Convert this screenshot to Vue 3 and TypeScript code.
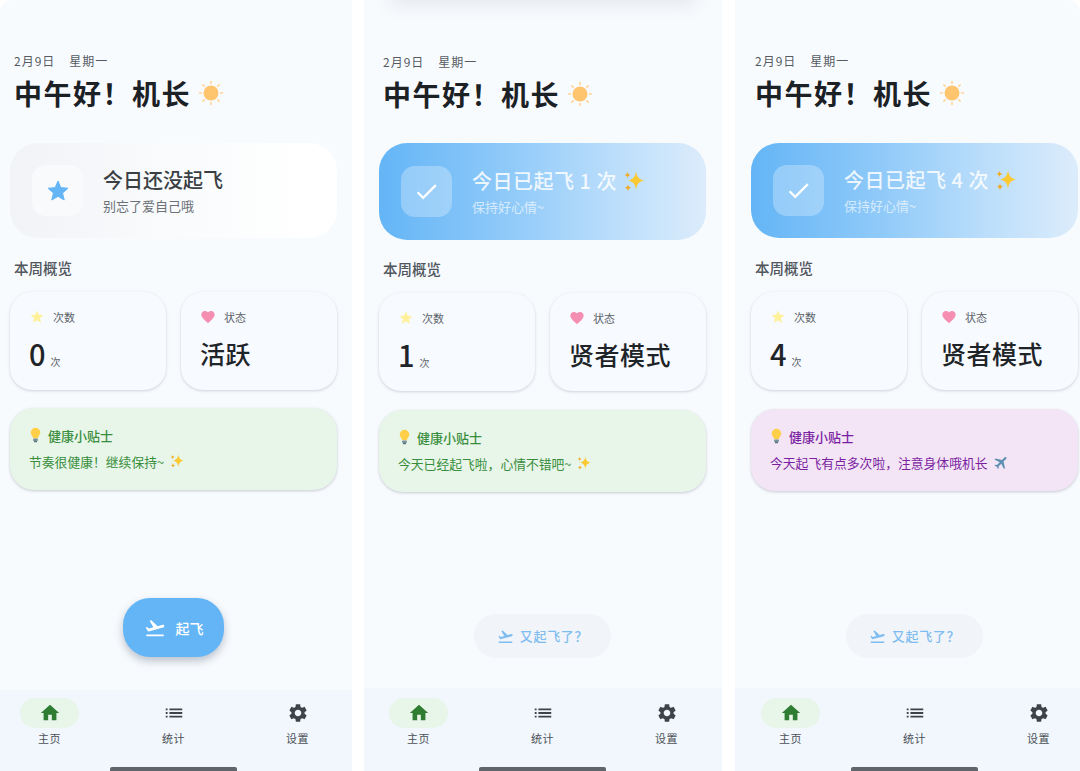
<script setup lang="ts">
interface Tab {
  label: string
  path: string
  active?: boolean
}

interface Screen {
  id: string
  count: number
  status: string
  tip: string
  tipTone: 'green' | 'purple'
  tipIcon: 'sparkle' | 'plane'
}

const takeoff =
  'M2.5 19h19v2h-19zm19.57-9.36c-.21-.8-1.04-1.28-1.84-1.06L14.92 10l-6.9-6.43-1.93.51 4.14 7.17-4.97 1.33-1.97-1.54-1.45.39 1.82 3.16.77 1.33 1.6-.43 5.31-1.42 4.35-1.16L21 11.49c.81-.23 1.28-1.05 1.07-1.85z'
const star = 'M12 17.27L18.18 21l-1.64-7.03L22 9.24l-7.19-.61L12 2 9.19 8.63 2 9.24l5.46 4.73L5.82 21z'
const heart =
  'M12 21.35l-1.45-1.32C5.4 15.36 2 12.28 2 8.5 2 5.42 4.42 3 7.5 3c1.74 0 3.34.81 4.5 2.09C13.16 3.81 14.76 3 16.5 3 19.58 3 22 5.42 22 8.5c0 3.78-3.4 6.86-8.55 11.54L12 21.35z'
const plane =
  'M21 16v-2l-8-5V3.5c0-.83-.67-1.5-1.5-1.5S10 2.67 10 3.5V9l-8 5v2l8-2.5V19l-2 1.5V22l3.5-1 3.5 1v-1.5L13 19v-5.5l8 2.5z'
const sparkBig = 'M14 2c.8 6 2.6 8.3 8 9.5-5.4 1.2-7.2 3.5-8 9.5-.8-6-2.6-8.3-8-9.5 5.4-1.2 7.2-3.5 8-9.5z'
const sparkSmall =
  'M5.5 2.5c.3 2.2 1 3 3 3.5-2 .5-2.7 1.3-3 3.5-.3-2.2-1-3-3-3.5 2-.5 2.7-1.3 3-3.5zM6 15c.3 2.4 1 3.3 3.2 3.8-2.2.5-2.9 1.4-3.2 3.8-.3-2.4-1-3.3-3.2-3.8 2.2-.5 2.9-1.4 3.2-3.8z'
const rays = [0, 45, 90, 135, 180, 225, 270, 315]

const tabs: Tab[] = [
  { label: '主页', path: 'M10 20v-6h4v6h5v-8h3L12 3 2 12h3v8z', active: true },
  { label: '统计', path: 'M3 13h2v-2H3v2zm0 4h2v-2H3v2zm0-8h2V7H3v2zm4 4h14v-2H7v2zm0 4h14v-2H7v2zM7 7v2h14V7H7z' },
  {
    label: '设置',
    path: 'M19.14 12.94c.04-.3.06-.61.06-.94 0-.32-.02-.64-.07-.94l2.03-1.58c.18-.14.23-.41.12-.61l-1.92-3.32c-.12-.22-.37-.29-.59-.22l-2.39.96c-.5-.38-1.03-.7-1.62-.94l-.36-2.54c-.04-.24-.24-.41-.48-.41h-3.84c-.24 0-.43.17-.47.41l-.36 2.54c-.59.24-1.13.57-1.62.94l-2.39-.96c-.22-.08-.47 0-.59.22L2.74 8.87c-.12.21-.08.47.12.61l2.03 1.58c-.05.3-.09.63-.09.94s.02.64.07.94l-2.03 1.58c-.18.14-.23.41-.12.61l1.92 3.32c.12.22.37.29.59.22l2.39-.96c.5.38 1.03.7 1.62.94l.36 2.54c.05.24.24.41.48.41h3.84c.24 0 .44-.17.47-.41l.36-2.54c.59-.24 1.13-.56 1.62-.94l2.39.96c.22.08.47 0 .59-.22l1.92-3.32c.12-.22.07-.47-.12-.61l-2.01-1.58zM12 15.6c-1.98 0-3.6-1.62-3.6-3.6s1.62-3.6 3.6-3.6 3.6 1.62 3.6 3.6-1.62 3.6-3.6 3.6z'
  }
]

const screens: Screen[] = [
  { id: 'a', count: 0, status: '活跃', tip: '节奏很健康！继续保持~', tipTone: 'green', tipIcon: 'sparkle' },
  { id: 'b', count: 1, status: '贤者模式', tip: '今天已经起飞啦，心情不错吧~', tipTone: 'green', tipIcon: 'sparkle' },
  { id: 'c', count: 4, status: '贤者模式', tip: '今天起飞有点多次啦，注意身体哦机长', tipTone: 'purple', tipIcon: 'plane' }
]
</script>

<template>
  <div class="page">
    <section v-for="s in screens" :key="s.id" :class="['phone', `phone--${s.id}`]">
      <div v-if="s.id === 'b'" class="phone__sheet" />

      <main class="phone__body">
        <p class="date"><span>2月9日</span><span>星期一</span></p>
        <h1 class="greet">
          中午好！机长
          <svg class="greet__sun" viewBox="0 0 26 26">
            <circle cx="13" cy="13" r="7.5" fill="#ffc46e" />
            <line
              v-for="r in rays"
              :key="r"
              x1="13"
              y1="1.5"
              x2="13"
              y2="3.5"
              stroke="#ffd596"
              stroke-width="1.6"
              stroke-linecap="round"
              :transform="`rotate(${r} 13 13)`"
            />
          </svg>
        </h1>

        <div :class="['hero', { 'hero--done': s.count > 0 }]">
          <div class="hero__icon">
            <svg v-if="s.count === 0" viewBox="0 0 24 24" width="24" height="24">
              <path :d="star" fill="#64b5f6" stroke="#64b5f6" stroke-width="1" stroke-linejoin="round" />
            </svg>
            <svg v-else viewBox="0 0 24 24" width="27" height="27">
              <path d="M9 16.17L4.83 12l-1.41 1.41L9 19 21 7l-1.41-1.41z" fill="#fff" />
            </svg>
          </div>
          <div class="hero__text">
            <div v-if="s.count === 0" class="hero__title">今日还没起飞</div>
            <div v-else class="hero__title">
              今日已起飞 {{ s.count }} 次
              <svg viewBox="0 0 24 24" width="24" height="24">
                <path :d="sparkBig" fill="#fbc934" />
                <path :d="sparkSmall" fill="#f2a91f" />
              </svg>
            </div>
            <div class="hero__sub">{{ s.count === 0 ? '别忘了爱自己哦' : '保持好心情~' }}</div>
          </div>
        </div>

        <h2 class="section">本周概览</h2>

        <div class="stats">
          <div class="stat">
            <div class="stat__head">
              <svg viewBox="0 0 24 24" width="14" height="14"><path :d="star" fill="#fff09a" stroke="#fff09a" stroke-linejoin="round" /></svg>
              <span>次数</span>
            </div>
            <div class="stat__value">{{ s.count }}<small>次</small></div>
          </div>
          <div class="stat">
            <div class="stat__head">
              <svg viewBox="0 0 24 24" width="18" height="18"><path :d="heart" fill="#f48fb1" /></svg>
              <span>状态</span>
            </div>
            <div class="stat__value stat__value--text">{{ s.status }}</div>
          </div>
        </div>

        <div :class="['tip', `tip--${s.tipTone}`]">
          <div class="tip__title">
            <svg viewBox="0 0 16 20" width="13" height="16">
              <path d="M8 1a6 6 0 0 0-6 6c0 2.4 1.5 3.7 2.4 5.2.4.7.6 1.3.6 2h6c0-.7.2-1.3.6-2C12.5 10.700 14 9.400 14 7a6 6 0 0 0-6-6z" fill="#ffcf4a" />
              <rect x="5" y="14.5" width="6" height="3" rx="1" fill="#78909c" />
              <rect x="6" y="17.5" width="4" height="1.5" rx=".7" fill="#546e7a" />
            </svg>
            健康小贴士
          </div>
          <div class="tip__text">
            {{ s.tip }}
            <svg v-if="s.tipIcon === 'sparkle'" viewBox="0 0 24 24" width="16" height="16">
              <path :d="sparkBig" fill="#fbc934" />
              <path :d="sparkSmall" fill="#f2a91f" />
            </svg>
            <svg v-else viewBox="0 0 24 24" width="17" height="17">
              <path :d="plane" fill="#5d8fb3" transform="rotate(45 12 12)" />
            </svg>
          </div>
        </div>

        <div class="rail rail--action">
          <button v-if="s.count === 0" type="button" class="fab">
            <svg viewBox="0 0 24 24" width="22" height="22"><path :d="takeoff" fill="#fff" /></svg>
            起飞
          </button>
          <button v-else type="button" class="again">
            <svg viewBox="0 0 24 24" width="17" height="17"><path :d="takeoff" fill="#7fbdf0" /></svg>
            <span>又起飞了？</span>
          </button>
        </div>
      </main>

      <nav class="nav">
        <div class="rail nav__tabs">
          <div v-for="t in tabs" :key="t.label" :class="['tab', { 'tab--active': t.active }]">
            <div class="tab__icon">
              <svg viewBox="0 0 24 24" width="22" height="22"><path :d="t.path" fill="currentColor" /></svg>
            </div>
            <span class="tab__label">{{ t.label }}</span>
          </div>
        </div>
        <div class="rail nav__home"><i /></div>
      </nav>
    </section>
  </div>
</template>

<style>
html,
body {
  margin: 0;
  background: #fff;
}
</style>

<style scoped>
.page {
  display: flex;
  width: 1080px;
  height: 771px;
  overflow: hidden;
  background: #fff;
  font-family: 'Noto Sans CJK SC', 'Noto Sans', sans-serif;
  color: #1f2428;
}

.phone {
  position: relative;
  flex: none;
  display: flex;
  flex-direction: column;
  height: 771px;
  overflow: hidden;
  background: #f8fbfe;
}

.phone--a {
  --inset: 10px;
  --text: 4px;
  --rail: 20px;
  --hero-h: 95px;
  --top: 53px;
  --nav-h: 81px;
  --action: 33px;
  --tip-gap: 18px;
  width: 352px;
  margin-right: 12px;
  border-top-left-radius: 12px;
}

.phone--b {
  --inset: 15px;
  --text: 4px;
  --rail: 25px;
  --hero-h: 97px;
  --top: 54px;
  --nav-h: 83px;
  --action: 30px;
  --tip-gap: 19px;
  width: 358px;
  margin-right: 13px;
}

.phone--c {
  --inset: 16px;
  --text: 4px;
  --rail: 26px;
  --hero-h: 95px;
  --top: 53px;
  --nav-h: 83px;
  --action: 30px;
  --tip-gap: 19px;
  width: 345px;
  border-top-right-radius: 12px;
}

.phone__sheet {
  position: absolute;
  top: -16px;
  left: 26px;
  right: 26px;
  height: 16px;
  box-shadow: 0 4px 18px rgba(60, 70, 90, 0.12);
}

.phone__body {
  flex: 1;
  display: flex;
  flex-direction: column;
  padding: var(--top) 0 var(--action) var(--inset);
}

.date {
  display: flex;
  gap: 14px;
  height: 16px;
  margin: 0 0 0 var(--text);
  line-height: 16px;
  font-size: 12px;
  letter-spacing: 1px;
  color: #555b61;
}

.greet {
  display: flex;
  align-items: center;
  gap: 7px;
  height: 40px;
  margin: 4px 0 0 var(--text);
  line-height: 40px;
  font-size: 28px;
  font-weight: 700;
  letter-spacing: 1.5px;
  color: #1c2125;
}

.greet__sun {
  width: 26px;
  height: 26px;
}

.hero {
  display: flex;
  align-items: center;
  gap: 20px;
  box-sizing: border-box;
  width: 327px;
  height: var(--hero-h);
  margin-top: 30px;
  padding-left: 22px;
  border-radius: 28px;
  background: linear-gradient(90deg, #f1f3f7 0%, #f9fbfc 50%, #fff 90%);
}

.phone--b .hero {
  margin-top: 29px;
}

.hero--done {
  background: linear-gradient(90deg, #64b5f6 0%, #90caf9 40%, #bbdefb 72%, #dcecfb 100%);
}

.hero__icon {
  display: flex;
  align-items: center;
  justify-content: center;
  flex: none;
  width: 51px;
  height: 51px;
  border-radius: 14px;
  background: #f8fafc;
}

.hero--done .hero__icon {
  background: rgba(255, 255, 255, 0.28);
}

.hero__text {
  padding-bottom: 2px;
}

.hero__title {
  display: flex;
  align-items: center;
  gap: 5px;
  height: 30px;
  line-height: 30px;
  font-size: 20px;
  font-weight: 500;
  color: #3a3f44;
}

.hero--done .hero__title {
  color: rgba(255, 255, 255, 0.85);
  letter-spacing: 0.5px;
}

.hero__sub {
  margin-top: 2px;
  line-height: 18px;
  font-size: 13px;
  color: #6b7177;
}

.hero--done .hero__sub {
  color: rgba(255, 255, 255, 0.65);
}

.section {
  height: 20px;
  margin: 20px 0 0 var(--text);
  line-height: 20px;
  font-size: 14.5px;
  font-weight: 500;
  color: #50565c;
}

.phone--b .section {
  margin-top: 19px;
}

.stats {
  display: flex;
  gap: 15px;
  margin-top: 14px;
}

.stat {
  box-sizing: border-box;
  width: 156px;
  height: 98px;
  padding: 16px 0 0 19px;
  border-radius: 22px;
  background: #f7faff;
  box-shadow: 0 1px 3px rgba(70, 80, 100, 0.24);
}

.stat__head {
  display: flex;
  align-items: center;
  gap: 8px;
  height: 18px;
  font-size: 11px;
  color: #5c6268;
}

.stat__head svg {
  width: 16px;
}

.stat__value {
  margin-top: 7px;
  line-height: 40px;
  font-size: 29px;
  font-weight: 500;
  color: #1f2428;
}

.stat__value small {
  margin-left: 5px;
  font-size: 10px;
  font-weight: 400;
  color: #5c6268;
}

.stat__value--text {
  font-size: 25px;
  letter-spacing: 0.5px;
}

.tip {
  box-sizing: border-box;
  width: 327px;
  height: 82px;
  margin-top: var(--tip-gap);
  padding: 17px 0 0 19px;
  border-radius: 24px;
  box-shadow: 0 1px 3px rgba(70, 80, 100, 0.28);
}

.tip--green {
  background: #e8f5e9;
  color: #388e3c;
}

.tip--purple {
  background: #f3e5f5;
  color: #7b1fa2;
}

.tip__title {
  display: flex;
  align-items: center;
  gap: 6px;
  height: 20px;
  font-size: 13px;
  font-weight: 500;
}

.tip__text {
  display: flex;
  align-items: center;
  gap: 5px;
  height: 20px;
  margin-top: 6px;
  font-size: 12.8px;
}

.rail {
  width: 307px;
  margin-left: calc(var(--rail) - var(--inset));
}

.rail--action {
  display: flex;
  justify-content: center;
  margin-top: auto;
}

.fab {
  display: flex;
  align-items: center;
  justify-content: center;
  gap: 10px;
  width: 101px;
  height: 59px;
  padding: 0;
  border: 0;
  border-radius: 27px;
  background: #64b5f6;
  box-shadow: 0 4px 8px rgba(40, 60, 90, 0.3);
  font: inherit;
  font-size: 14px;
  font-weight: 500;
  color: #fff;
}

.again {
  display: flex;
  align-items: center;
  justify-content: center;
  gap: 6px;
  width: 137px;
  height: 44px;
  padding: 0;
  border: 0;
  border-radius: 22px;
  background: #f1f4f9;
  font: inherit;
  font-size: 13px;
  font-weight: 500;
  letter-spacing: 0.7px;
  color: #7fbdf0;
}

.again span {
  margin-bottom: 2px;
}

.nav {
  display: flex;
  flex-direction: column;
  height: var(--nav-h);
  background: #f2f7fd;
}

.phone--b .nav,
.phone--c .nav {
  padding-top: 2px;
  box-sizing: border-box;
}

.nav__tabs {
  display: flex;
  gap: 65px;
  margin-left: var(--rail);
  padding-top: 8px;
}

.tab {
  display: flex;
  flex-direction: column;
  align-items: center;
  width: 59px;
  color: #3d4349;
}

.tab__icon {
  display: flex;
  align-items: center;
  justify-content: center;
  width: 59px;
  height: 30px;
  border-radius: 15px;
}

.tab--active {
  color: #2e7d32;
}

.tab--active .tab__icon {
  background: #e8f5e9;
}

.tab__label {
  margin-top: 2px;
  line-height: 16px;
  font-size: 11px;
  letter-spacing: 0.5px;
  color: #4a5056;
}

.nav__home {
  display: flex;
  justify-content: center;
  margin-top: auto;
  margin-left: var(--rail);
}

.nav__home i {
  display: block;
  width: 127px;
  height: 4px;
  border-radius: 2px 2px 0 0;
  background: #5f656b;
}
</style>
